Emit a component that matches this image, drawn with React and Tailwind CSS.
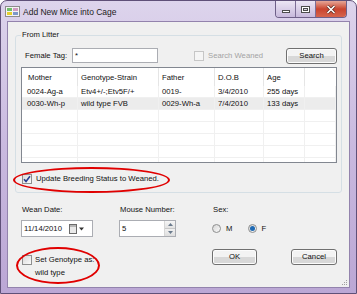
import React from 'react'

const Check = ({ checked, disabled }) => (
  <span
    className={`w-[10px] h-[10px] border flex items-center justify-center shrink-0 ${
      disabled ? 'border-[#c6c6c6] bg-[#f5f5f5]' : 'border-[#8e8f8f] bg-linear-to-br from-[#d9d9d9] to-[#fbfbfb]'
    }`}
  >
    {checked && (
      <svg width="8" height="8" viewBox="0 0 8 8">
        <path d="M1 4.3 L3 6.4 L7 1.2" fill="none" stroke="#2a3f8f" strokeWidth="1.6" />
      </svg>
    )}
  </span>
)

const Btn = ({ children, className }) => (
  <div
    className={`h-[16px] border border-[#707070] rounded-[3px] bg-linear-to-b from-[#f3f3f3] from-50% to-[#d8d8d8] to-50% shadow-[inset_0_0_0_1px_#fcfcfc] flex items-center justify-center ${className}`}
  >
    {children}
  </div>
)

const Radio = ({ checked }) => (
  <span className="w-[9px] h-[9px] rounded-full border border-[#8e8f8f] bg-linear-to-br from-[#d6d6d6] to-[#fafafa] flex items-center justify-center shrink-0">
    {checked && <span className="w-[5px] h-[5px] rounded-full bg-[#1f6ab4]" />}
  </span>
)

const rows = [
  ['0024-Ag-a', 'Etv4+/-;Etv5F/+', '0019-', '3/4/2010', '255 days'],
  ['0030-Wh-p', 'wild type FVB', '0029-Wh-a', '7/4/2010', '133 days'],
  ['', '', '', '', ''],
  ['', '', '', '', ''],
  ['', '', '', '', ''],
  ['', '', '', '', ''],
  ['', '', '', '', ''],
]

const cols = 'grid grid-cols-[56px_81px_56px_49px_41px_1fr]'

export default function App() {
  return (
    <div className="w-[357px] h-[294px] border border-[#5f5078] rounded-t-[7px] bg-linear-to-b from-[#ddd4ec] via-[#c9b9df] to-[#bba7d5] flex flex-col font-['Liberation_Sans',Arial,sans-serif] text-[7.7px] text-[#111] overflow-hidden">
      {/* Title bar */}
      <div className="h-[20px] flex items-start shrink-0">
        <svg className="ml-[4px] mt-[5px]" width="15" height="11" viewBox="0 0 15 11">
          <rect x="0.5" y="0.5" width="14" height="10" fill="#f4f4f4" stroke="#8c8c8c" />
          <rect x="2" y="2" width="5" height="3" fill="#6fbf6a" />
          <rect x="8" y="2" width="5" height="3" fill="#d19ac2" />
          <rect x="2" y="6" width="5" height="3" fill="#e6cf2e" />
          <rect x="8" y="6" width="5" height="3" fill="#7d97c9" />
        </svg>
        <span className="ml-[3px] mt-[6px] leading-[11px] text-[8.5px] text-[#1c1c1c]">Add New Mice into Cage</span>
        <div className="ml-auto mr-[9px] flex h-[17px] rounded-b-[4px] border border-t-0 border-[#6e5f88] overflow-hidden">
          <div className="w-[20px] bg-linear-to-b from-[#ece6f4] to-[#c8b9dc] border-r border-[#7d6e96] flex items-center justify-center">
            <span className="mt-[5px] w-[8px] h-[3px] bg-white border border-[#4d4d4d]" />
          </div>
          <div className="w-[20px] bg-linear-to-b from-[#ece6f4] to-[#c8b9dc] border-r border-[#7d6e96] flex items-center justify-center">
            <span className="w-[9px] h-[7px] border border-[#4d4d4d] bg-white flex items-center justify-center">
              <span className="w-[5px] h-[3px] border border-[#4d4d4d] bg-[#d9d3e2]" />
            </span>
          </div>
          <div className="w-[30px] bg-linear-to-b from-[#e5a597] via-[#c9432e] to-[#d6644d] flex items-center justify-center">
            <svg width="10" height="9" viewBox="0 0 10 9">
              <path d="M1.5 1 L8.5 8 M8.5 1 L1.5 8" stroke="#5a2a22" strokeWidth="3" />
              <path d="M1.5 1 L8.5 8 M8.5 1 L1.5 8" stroke="#ffffff" strokeWidth="1.6" />
            </svg>
          </div>
        </div>
      </div>

      {/* Client area */}
      <div className="relative mx-[6px] h-[267px] shrink-0 border border-[#9383ad] bg-[#f0f0f0] flex flex-col">
        <fieldset className="ml-[7px] mt-[8px] w-[327px] h-[163px] border border-[#d5dfe5] rounded-[3px]">
          <legend className="ml-[5px] px-[1px] leading-[10px]">From Litter</legend>

          <div className="mt-[8px] h-[15px] flex items-center">
            <span className="ml-[9px] w-[47px] leading-[10px]">Female Tag:</span>
            <div className="w-[86px] h-[15px] border border-[#abadb3] bg-white pl-[2px] leading-[13px]">*</div>
            <span className="ml-[36px]">
              <Check disabled />
            </span>
            <span className="ml-[4px] text-[#a3a3a3] leading-[10px]">Search Weaned</span>
            <Btn className="ml-auto mr-[4px] w-[51px] h-[15px]">Search</Btn>
          </div>

          <div className="mt-[4px] ml-[5px] w-[316px] h-[96px] border border-[#828790] bg-white overflow-hidden">
            <div className={`${cols} h-[18px]`}>
              {['Mother', 'Genotype-Strain', 'Father', 'D.O.B', 'Age', ''].map((h, i) => (
                <div
                  key={i}
                  className={`border-r border-[#e5e5e5] flex items-center pt-[1px] ${i === 0 ? 'pl-[6px]' : 'pl-[3px]'} ${i === 5 ? 'border-r-0' : ''}`}
                >
                  {h}
                </div>
              ))}
            </div>
            {rows.map((r, ri) => (
              <div key={ri} className={`${cols} h-[12px] border-b border-[#f0f0f0] ${ri === 1 ? 'bg-[#ececec]' : ''}`}>
                {[...r, ''].map((c, ci) => (
                  <div
                    key={ci}
                    className={`border-r border-[#f0f0f0] leading-[11px] whitespace-nowrap overflow-hidden ${ci === 0 ? 'pl-[5px]' : 'pl-[3px]'}`}
                  >
                    {c}
                  </div>
                ))}
              </div>
            ))}
          </div>

          <div className="mt-[11px] ml-[6px] h-[10px] flex items-center">
            <Check checked />
            <span className="ml-[4px] leading-[10px]">Update Breeding Status to Weaned.</span>
          </div>
        </fieldset>

        <div className="mt-[12px] ml-[14px] flex leading-[10px]">
          <span className="w-[98px]">Wean Date:</span>
          <span className="w-[93px]">Mouse Number:</span>
          <span>Sex:</span>
        </div>

        <div className="mt-[5px] ml-[13px] h-[17px] flex items-center">
          <div className="w-[72px] h-[17px] border border-[#abadb3] bg-white flex items-center pl-[2px]">
            <span className="leading-[10px]">11/14/2010</span>
            <svg className="ml-[7px]" width="9" height="10" viewBox="0 0 9 10">
              <rect x="0.5" y="0.5" width="7" height="9" fill="#e9e9e9" stroke="#6b6b6b" />
              <rect x="1" y="1" width="6" height="2" fill="#b6b6b6" />
            </svg>
            <svg className="ml-[1px]" width="5" height="4" viewBox="0 0 5 4">
              <path d="M0 0.5 L5 0.5 L2.5 3.5 Z" fill="#333" />
            </svg>
          </div>

          <div className="ml-[26px] w-[57px] h-[17px] border border-[#abadb3] bg-white flex">
            <span className="pl-[2px] leading-[15px] flex-1">5</span>
            <div className="w-[11px] flex flex-col border-l border-[#d6d6d6]">
              <div className="flex-1 bg-linear-to-b from-[#f6f6f6] to-[#e3e3e3] border-b border-[#c8c8c8] flex items-center justify-center">
                <svg width="5" height="3" viewBox="0 0 5 3">
                  <path d="M0 3 L5 3 L2.5 0 Z" fill="#6a7a8c" />
                </svg>
              </div>
              <div className="flex-1 bg-linear-to-b from-[#f1f1f1] to-[#dedede] flex items-center justify-center">
                <svg width="5" height="3" viewBox="0 0 5 3">
                  <path d="M0 0 L5 0 L2.5 3 Z" fill="#6a7a8c" />
                </svg>
              </div>
            </div>
          </div>

          <div className="ml-[36px] flex items-center">
            <Radio />
            <span className="ml-[5px] leading-[10px]">M</span>
            <span className="ml-[16px]">
              <Radio checked />
            </span>
            <span className="ml-[4px] leading-[10px]">F</span>
          </div>
        </div>

        <div className="mt-[12px] ml-[14px] flex">
          <div className="w-[190px]">
            <div className="mt-[6px] h-[10px] flex items-center">
              <Check />
              <span className="ml-[3px] leading-[10px]">Set Genotype as:</span>
            </div>
            <div className="mt-[3px] pl-[13px] leading-[10px]">wild type</div>
          </div>
          <Btn className="w-[45px]">OK</Btn>
          <Btn className="ml-[34px] w-[46px]">Cancel</Btn>
        </div>

        {/* red highlight ellipses */}
        <div className="absolute left-[5px] top-[145px] w-[157px] h-[26px] rounded-[50%] border-2 border-[#e00000]" />
        <div className="absolute left-[8px] top-[225px] w-[84px] h-[37px] rounded-[50%] border-2 border-[#e00000]" />

        <svg className="absolute right-[1px] bottom-[1px]" width="6" height="6" viewBox="0 0 6 6">
          <rect x="4" y="0" width="1" height="1" fill="#a0a0a0" />
          <rect x="2" y="2" width="1" height="1" fill="#a0a0a0" />
          <rect x="4" y="2" width="1" height="1" fill="#a0a0a0" />
          <rect x="0" y="4" width="1" height="1" fill="#a0a0a0" />
          <rect x="2" y="4" width="1" height="1" fill="#a0a0a0" />
          <rect x="4" y="4" width="1" height="1" fill="#a0a0a0" />
        </svg>
      </div>
    </div>
  )
}
